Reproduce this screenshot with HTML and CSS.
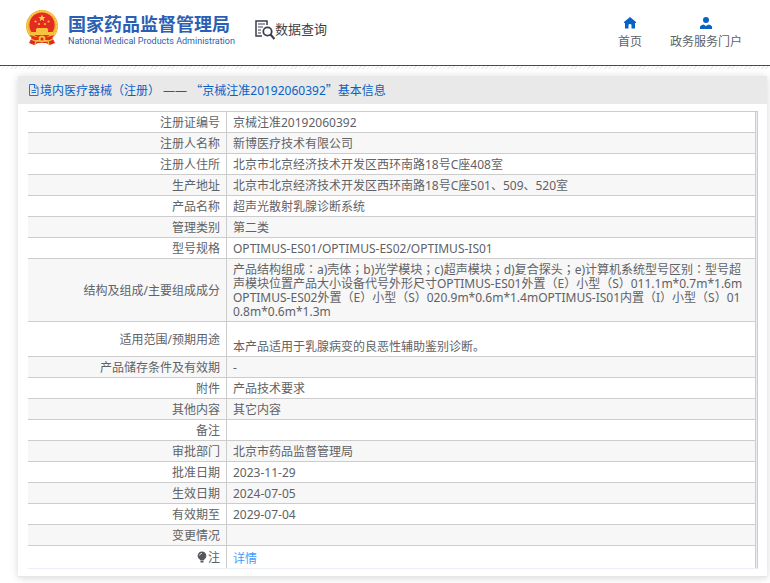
FILE: index.html
```html
<!DOCTYPE html>
<html lang="zh-CN">
<head>
<meta charset="utf-8">
<meta name="viewport" content="width=device-width, initial-scale=1">
<title>国家药品监督管理局 数据查询</title>
<link rel="stylesheet" href="styles.css">
</head>
<body>
<header class="site-header">
  <div class="brand">
    <svg class="emblem" viewBox="0 0 34 36" aria-hidden="true">
      <path d="M7 27 4 33l5 2 4-2h8l4 2 5-2-3-6z" fill="#dc2b22"/>
      <circle cx="17" cy="16" r="16" fill="#edb12e"/>
      <circle cx="17" cy="16" r="14.6" fill="none" stroke="#f8d65c" stroke-width="1.2" stroke-dasharray="2 1"/>
      <circle cx="17" cy="15" r="12.6" fill="#e32b21"/>
      <path d="m17 4.500 1 2.500h2.600l-2.100 1.600.8 2.600-2.300-1.600-2.300 1.600.8-2.600L13.400 7H16z" fill="#f9d649"/>
      <g fill="#f9c23c"><circle cx="10.500" cy="11.500" r="1.100"/><circle cx="23.500" cy="11.500" r="1.100"/><circle cx="14" cy="14" r="1.100"/><circle cx="20" cy="14" r="1.100"/>
      <path d="M12 18h10l1.500 2H23v2h5v3H6v-3h5v-2h-.5z"/></g>
      <path d="M5 25q12 5 24 0l-3 5H8z" fill="#e32b21"/>
      <circle cx="17" cy="29" r="3.400" fill="#f4bd38"/><circle cx="17" cy="29" r="1.500" fill="#dc2b22"/>
      <path d="M6 29q5 3 8 2M28 29q-5 3-8 2M10 35l1-4M24 35l-1-4" fill="none" stroke="#f1b936" stroke-width="1.200"/>
    </svg>
    <div class="brand-text">
      <span class="brand-cn">国家药品监督管理局</span>
      <span class="brand-en">National Medical Products Administration</span>
    </div>
  </div>
  <div class="section">
    <svg class="search-icon" viewBox="0 0 20 20" fill="none" stroke="#3b3d4c" aria-hidden="true">
      <path d="M12 5V1H1v15h6" stroke-width="1.500"/>
      <path d="M3 4h7M3 7h5M3 10h3M3 13h3" stroke-width="1.200"/>
      <circle cx="12.500" cy="11.500" r="4.200" stroke-width="1.800"/>
      <path d="m15.500 14.500 4 4.500" stroke-width="2.200"/>
    </svg>
    <span>数据查询</span>
  </div>
  <nav class="nav">
    <a href="#home"><svg viewBox="0 0 12 12" aria-hidden="true"><path d="M6 0 0 5v1h1v5.500h3.500V8q0-1 1.500-1t1.500 1v3.500H11V6h1V5z" fill="#0861c5"/></svg>首页</a>
    <a href="#portal"><svg viewBox="0 0 12 12" aria-hidden="true"><circle cx="6" cy="3" r="3" fill="#0861c5"/><path d="M0 12V9.500Q1 8 3.500 7.500L6 9l2.500-1.500Q11 8 12 9.500V12z" fill="#0861c5"/></svg>政务服务门户</a>
  </nav>
</header>
<div class="hatch"></div>
<main class="panel">
  <h1 class="panel-title">
    <svg viewBox="0 0 11 12" fill="none" stroke="#2a74d0" aria-hidden="true"><path d="M1.500 .5H7l3 3v8H1.500zM6.500 .5v3.500H10M3.500 6.500h4.500M3.500 8.500h4.500"/></svg>
    <span class="centered-marks" lang="zh-TW">境内医疗器械（注册） —— <span class="quote">“</span>京械注准20192060392<span class="quote">”</span>基本信息</span>
  </h1>
  <div class="panel-body">
    <div class="frame">
      <table class="info">
        <tbody>
        <tr><th scope="row">注册证编号</th><td>京械注准20192060392</td></tr>
        <tr><th scope="row">注册人名称</th><td>新博医疗技术有限公司</td></tr>
        <tr><th scope="row">注册人住所</th><td>北京市北京经济技术开发区西环南路18号C座408室</td></tr>
        <tr><th scope="row">生产地址</th><td>北京市北京经济技术开发区西环南路18号C座501、509、520室</td></tr>
        <tr><th scope="row">产品名称</th><td>超声光散射乳腺诊断系统</td></tr>
        <tr><th scope="row">管理类别</th><td>第二类</td></tr>
        <tr><th scope="row">型号规格</th><td>OPTIMUS-ES01/OPTIMUS-ES02/OPTIMUS-IS01</td></tr>
        <tr><th scope="row">结构及组成/主要组成成分</th><td class="centered-marks" lang="zh-TW">产品结构组成：a)壳体；b)光学模块；c)超声模块；d)复合探头；e)计算机系统型号区别：型号超声模块位置产品大小设备代号外形尺寸OPTIMUS-ES01外置（E）小型（S）011.1m*0.7m*1.6mOPTIMUS-ES02外置（E）小型（S）020.9m*0.6m*1.4mOPTIMUS-IS01内置（I）小型（S）010.8m*0.6m*1.3m</td></tr>
        <tr><th scope="row">适用范围/预期用途</th><td><br>本产品适用于乳腺病变的良恶性辅助鉴别诊断。</td></tr>
        <tr><th scope="row">产品储存条件及有效期</th><td>-</td></tr>
        <tr><th scope="row">附件</th><td>产品技术要求</td></tr>
        <tr><th scope="row">其他内容</th><td>其它内容</td></tr>
        <tr><th scope="row">备注</th><td></td></tr>
        <tr><th scope="row">审批部门</th><td>北京市药品监督管理局</td></tr>
        <tr><th scope="row">批准日期</th><td>2023-11-29</td></tr>
        <tr><th scope="row">生效日期</th><td>2024-07-05</td></tr>
        <tr><th scope="row">有效期至</th><td>2029-07-04</td></tr>
        <tr><th scope="row">变更情况</th><td></td></tr>
        <tr class="note"><th scope="row"><svg viewBox="0 0 10 12" aria-hidden="true"><path d="M5 .5a4.300 4.300 0 0 1 2.500 7.800L6.500 9.500h-3L2.500 8.300A4.300 4.300 0 0 1 5 .5zM3.500 10h3v1.500h-3z" fill="#55575c"/><path d="M2.500 4.500Q3 2.500 5 2.300" fill="none" stroke="#ddd"/></svg>注</th><td><a href="#detail">详情</a></td></tr>
        </tbody>
      </table>
    </div>
  </div>
</main>
</body>
</html>
```
FILE: styles.css
```css
* { box-sizing: border-box; }
body {
  margin: 0;
  background: #fff;
  color: #606266;
  font: 12px/14px "Noto Sans", "Noto Sans CJK SC", sans-serif;
}
.site-header {
  display: flex;
  align-items: flex-start;
  height: 66px;
  padding: 0 28px 0 25px;
  border-bottom: 1px solid #0a5ab0;
}
.brand { display: flex; gap: 9px; padding-top: 10px; }
.emblem { width: 34px; height: 36px; }
.brand-text {
  display: flex;
  flex-direction: column;
  padding-top: 2px;
  color: #2b5fb3;
  white-space: nowrap;
}
.brand-cn { font: bold 18px/23px "Noto Sans CJK SC", sans-serif; }
.brand-en { font: 9px/12px Roboto, sans-serif; }
.section {
  display: flex;
  margin-left: 20px;
  padding-top: 20px;
  color: #3f3f46;
  font: 13px/18px "Noto Sans CJK SC", sans-serif;
  white-space: nowrap;
}
.search-icon { width: 20px; height: 20px; }
.nav { display: flex; gap: 28px; margin-left: auto; padding-top: 17px; }
.nav a {
  display: flex;
  flex-direction: column;
  align-items: center;
  gap: 6px;
  color: #606266;
  text-decoration: none;
  white-space: nowrap;
}
.nav svg { width: 12px; height: 12px; }
.hatch {
  height: 3px;
  background: repeating-linear-gradient(135deg, #ececec 0 1px, #fff 1px 3px);
}
.panel {
  margin: 7px 3px 6px 18px;
  background: #fff;
  border-bottom: 1px solid #e6e6e6;
  box-shadow: 0 1px 8px rgba(0, 0, 0, 0.16);
}
.panel-title {
  display: flex;
  align-items: center;
  gap: 1px;
  height: 28px;
  margin: 0;
  padding: 0 10px;
  background: #e9e9e9;
  color: #0861c5;
  font-size: 12px;
  font-weight: 400;
  line-height: 14px;
}
.panel-title svg { width: 11px; height: 12px; }
.centered-marks { font-family: "Noto Sans", "Noto Sans CJK TC", sans-serif; }
.quote { font-family: "Noto Sans CJK TC", sans-serif; }
.panel-body { padding: 7px 9px 7px 10px; }
.frame {
  padding-right: 1px;
  background: #ebeef5;
  border-right: 1px solid #ccc;
  border-top: 1px solid #ccc;
  border-bottom: 1px solid #ebeef5;
}
.info {
  width: 100%;
  background: #fff;
  border-collapse: separate;
  border-spacing: 0;
  table-layout: fixed;
}
.info th, .info td {
  height: 21px;
  padding: 4px 6px 2px;
  border-right: 1px solid #ccc;
  border-bottom: 1px solid #ccc;
  font-weight: 400;
  line-height: 14px;
  word-break: break-all;
}
.info th { width: 199px; text-align: right; }
.info td { text-align: left; }
.info tr:nth-child(even) { background: #f7f7f7; }
.info .note th, .info .note td { height: 22px; border-bottom: 0; }
.info .note td { padding-top: 6px; }
.note svg { width: 10px; height: 12px; margin-right: 1px; vertical-align: -1px; }
.note a { color: #409eff; text-decoration: none; }
```
